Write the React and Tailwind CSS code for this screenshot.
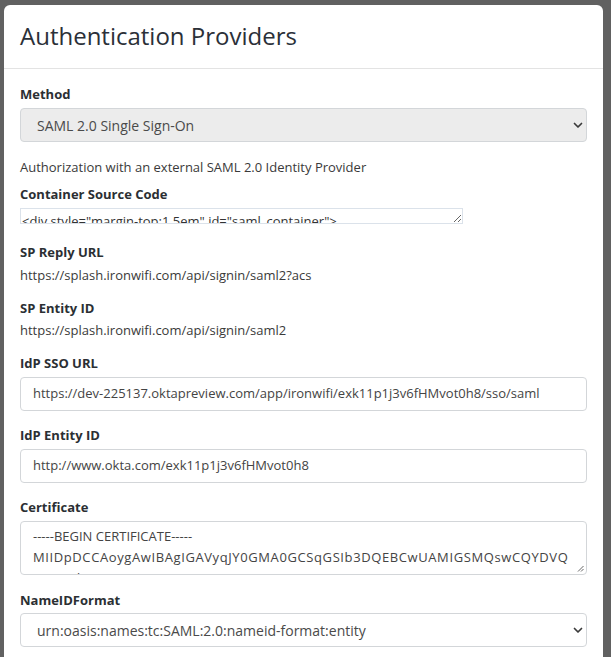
import React from 'react';

const Label = ({ children, className = '' }) => (
    <div className={`text-[13px] font-bold leading-[18px] text-[#2b2f33] ${className}`}>{children}</div>
);

const Chevron = () => (
    <svg width="10" height="7" viewBox="0 0 10 7" className="text-[#3a3a3a]">
        <path d="M1.5 1.5 L5 5 L8.5 1.5" fill="none" stroke="currentColor" strokeWidth="1.7" strokeLinecap="round" strokeLinejoin="round" />
    </svg>
);

const ResizeGrip = () => (
    <svg width="7" height="7" viewBox="0 0 7 7" className="absolute right-[2px] bottom-[2px] text-[#666]">
        <path d="M6.5 1 L1 6.5 M6.5 4 L4 6.5" fill="none" stroke="currentColor" strokeWidth="1" />
    </svg>
);

const FakeSelect = ({ value, className = '', disabled }) => (
    <div
        className={`flex items-center justify-between h-[34px] pl-[16px] pr-[3px] rounded-[4px] border border-[#d3d6d9] text-[14px] text-[#4a4a4a] ${disabled ? 'bg-[#ececec]' : 'bg-white'} ${className}`}
    >
        <span>{value}</span>
        <Chevron />
    </div>
);

const TextInput = ({ value, className = '' }) => (
    <div className={`flex items-center h-[34px] px-[12px] rounded-[4px] border border-[#d3d6d9] bg-white text-[13px] text-[#444] whitespace-nowrap overflow-hidden ${className}`}>
        {value}
    </div>
);

export default function App() {
    return (
        <div className="w-[611px] h-[657px] overflow-hidden bg-[#616161] pt-[5px] pl-[4px] pr-[8px]" style={{ fontFamily: '"Open Sans", "Liberation Sans", sans-serif' }}>
            <div className="bg-white rounded-t-[6px] h-[700px]">
                {/* header */}
                <div className="h-[64px] flex items-center px-[16px] border-b border-[#e3e3e3]">
                    <h1 className="text-[24px] leading-[30px] text-[#2b3038] font-normal pb-[1px]">Authentication Providers</h1>
                </div>

                {/* body */}
                <div className="px-[16px] pt-[16px]">
                    <Label>Method</Label>
                    <FakeSelect className="mt-[5px]" value="SAML 2.0 Single Sign-On" disabled />

                    <div className="mt-[16px] text-[13px] leading-[18px] text-[#3a3a3a]">
                        Authorization with an external SAML 2.0 Identity Provider
                    </div>

                    <Label className="mt-[9px]">Container Source Code</Label>
                    <textarea
                        readOnly
                        defaultValue={'<div style="margin-top:1.5em" id="saml_container">\n</div>'}
                        className="block mt-[5px] w-[443px] h-[16px] border border-[#dbe2ea] pl-[1px] pt-[3px] text-[13px] leading-[18px] text-[#333] overflow-hidden resize-y outline-none"
                    />

                    <Label className="mt-[19px]">SP Reply URL</Label>
                    <div className="mt-[5px] text-[13px] leading-[18px] text-[#3a3a3a]">https://splash.ironwifi.com/api/signin/saml2?acs</div>

                    <Label className="mt-[15px]">SP Entity ID</Label>
                    <div className="mt-[4px] text-[13px] leading-[18px] text-[#3a3a3a]">https://splash.ironwifi.com/api/signin/saml2</div>

                    <Label className="mt-[15px]">IdP SSO URL</Label>
                    <TextInput className="mt-[5px]" value="https://dev-225137.oktapreview.com/app/ironwifi/exk11p1j3v6fHMvot0h8/sso/saml" />

                    <Label className="mt-[15px]">IdP Entity ID</Label>
                    <TextInput className="mt-[5px]" value="http://www.okta.com/exk11p1j3v6fHMvot0h8" />

                    <Label className="mt-[15px]">Certificate</Label>
                    {/* certificate box, looks like a resizable textarea */}
                    <div className="relative mt-[5px] h-[54px] rounded-[4px] border border-[#d3d6d9] bg-white px-[12px] pt-[4px] overflow-hidden text-[13px] leading-[21px] text-[#444] whitespace-nowrap">
                        <div>-----BEGIN CERTIFICATE-----</div>
                        <div className="tracking-[0.6px]">MIIDpDCCAoygAwIBAgIGAVyqJY0GMA0GCSqGSIb3DQEBCwUAMIGSMQswCQYDVQ</div>
                        <div className="tracking-[0.6px]">QGEwdjVLLFTMBEGA1UECAwKQ2FsaWZvcm5pYTEWMBQGA1UEBwwNU2Fu</div>
                        <ResizeGrip />
                    </div>

                    <Label className="mt-[16px]">NameIDFormat</Label>
                    <FakeSelect className="mt-[4px]" value="urn:oasis:names:tc:SAML:2.0:nameid-format:entity" />
                </div>
            </div>
        </div>
    );
}
